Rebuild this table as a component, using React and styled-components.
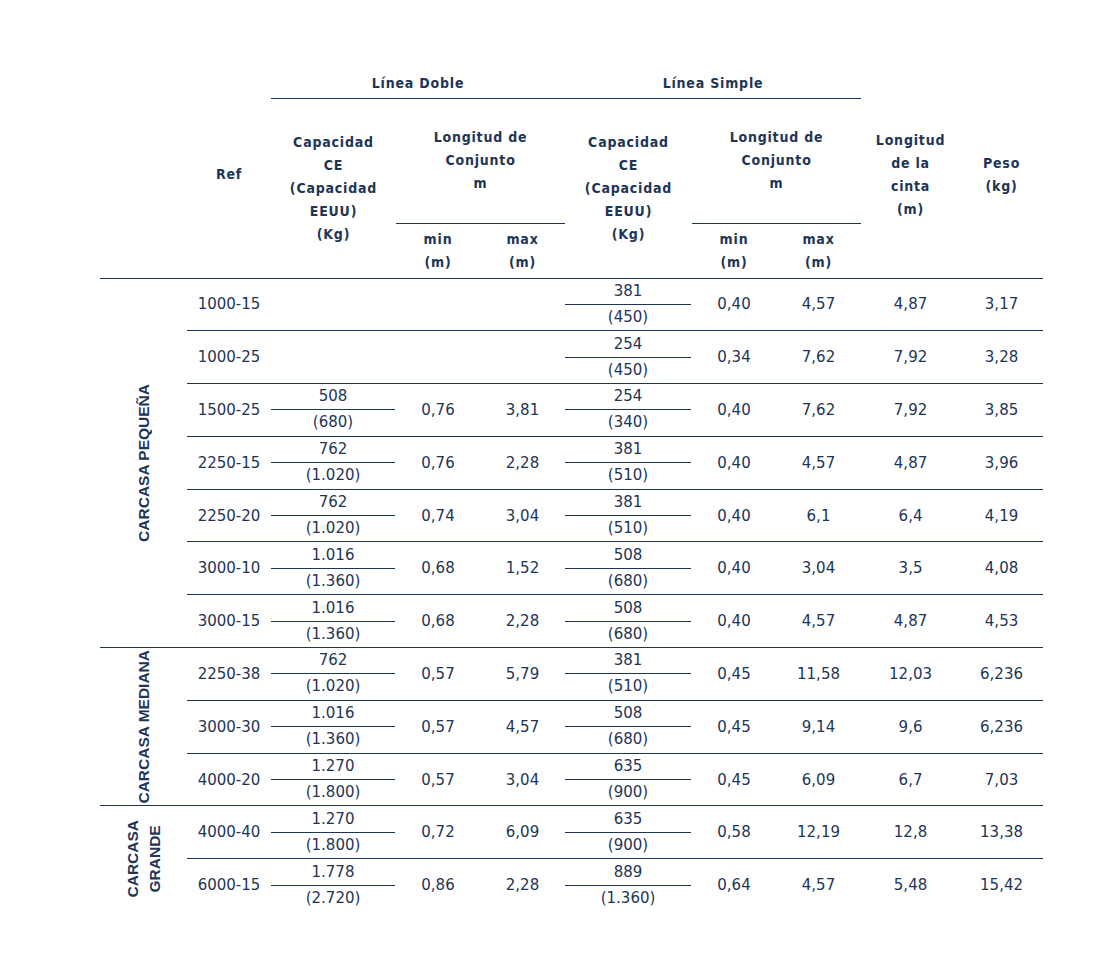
import React from 'react';
import styled, { createGlobalStyle } from 'styled-components';

const navy = '#1e3557';

const GlobalStyle = createGlobalStyle`
  html, body {
    margin: 0;
    padding: 0;
    background: #ffffff;
  }
`;

const Page = styled.div`
  padding: 70px 0 60px 100px;
`;

const Table = styled.table`
  width: 943px;
  table-layout: fixed;
  border-collapse: collapse;
  color: ${navy};
  font-family: 'DejaVu Sans', sans-serif;
  font-size: 15px;
`;

const Head = styled.th`
  font-family: 'DejaVu Sans Condensed', 'DejaVu Sans', sans-serif;
  font-stretch: condensed;
  font-weight: bold;
  font-size: 14px;
  letter-spacing: 0.8px;
  line-height: 23px;
  text-align: center;
  vertical-align: middle;
  padding: 0 0 ${p => p.$lift || 0}px;
  border-bottom: ${p => (p.$rule ? `1px solid ${navy}` : 'none')};
  height: ${p => (p.$h ? `${p.$h}px` : 'auto')};
`;

const Row = styled.tr`
  height: 52.8px;
`;

const Cell = styled.td`
  text-align: center;
  vertical-align: middle;
  padding: 0;
  font-weight: normal;
  line-height: 20px;
  border-top: ${p => (p.$first ? '1.5px' : '1px')} solid ${navy};
`;

const GroupCell = styled(Cell)`
  font-family: 'Liberation Sans', Arial, sans-serif;
  font-weight: bold;
  font-size: 15.5px;
  line-height: 22px;
  white-space: nowrap;
`;

const GroupLabel = styled.div`
  writing-mode: vertical-rl;
  transform: rotate(180deg);
  margin: 0 auto;
  text-align: center;
`;

const Fraction = styled.div`
  display: flex;
  flex-direction: column;
  align-items: stretch;
  margin-right: 1px;
  line-height: 25px;
`;

const Bar = styled.div`
  height: 1px;
  background: ${navy};
`;

const cap = pair =>
  pair ? (
    <Fraction>
      <span>{pair[0]}</span>
      <Bar />
      <span>{pair[1]}</span>
    </Fraction>
  ) : null;

const groups = [
  {
    label: ['CARCASA PEQUEÑA'],
    rows: [
      ['1000-15', null, '', '', ['381', '(450)'], '0,40', '4,57', '4,87', '3,17'],
      ['1000-25', null, '', '', ['254', '(450)'], '0,34', '7,62', '7,92', '3,28'],
      ['1500-25', ['508', '(680)'], '0,76', '3,81', ['254', '(340)'], '0,40', '7,62', '7,92', '3,85'],
      ['2250-15', ['762', '(1.020)'], '0,76', '2,28', ['381', '(510)'], '0,40', '4,57', '4,87', '3,96'],
      ['2250-20', ['762', '(1.020)'], '0,74', '3,04', ['381', '(510)'], '0,40', '6,1', '6,4', '4,19'],
      ['3000-10', ['1.016', '(1.360)'], '0,68', '1,52', ['508', '(680)'], '0,40', '3,04', '3,5', '4,08'],
      ['3000-15', ['1.016', '(1.360)'], '0,68', '2,28', ['508', '(680)'], '0,40', '4,57', '4,87', '4,53'],
    ],
  },
  {
    label: ['CARCASA MEDIANA'],
    rows: [
      ['2250-38', ['762', '(1.020)'], '0,57', '5,79', ['381', '(510)'], '0,45', '11,58', '12,03', '6,236'],
      ['3000-30', ['1.016', '(1.360)'], '0,57', '4,57', ['508', '(680)'], '0,45', '9,14', '9,6', '6,236'],
      ['4000-20', ['1.270', '(1.800)'], '0,57', '3,04', ['635', '(900)'], '0,45', '6,09', '6,7', '7,03'],
    ],
  },
  {
    label: ['CARCASA', 'GRANDE'],
    rows: [
      ['4000-40', ['1.270', '(1.800)'], '0,72', '6,09', ['635', '(900)'], '0,58', '12,19', '12,8', '13,38'],
      ['6000-15', ['1.778', '(2.720)'], '0,86', '2,28', ['889', '(1.360)'], '0,64', '4,57', '5,48', '15,42'],
    ],
  },
];

const widths = [87, 84, 125, 84, 85, 127, 84, 85, 99, 83];

export default function App() {
  return (
    <Page>
      <GlobalStyle />
      <Table>
        <colgroup>
          {widths.map((w, i) => (
            <col key={i} style={{ width: w }} />
          ))}
        </colgroup>
        <thead>
          <tr>
            <Head colSpan={2} $h={28} />
            <Head colSpan={3} $rule>Línea Doble</Head>
            <Head colSpan={3} $rule>Línea Simple</Head>
            <Head colSpan={2} />
          </tr>
          <tr>
            <Head rowSpan={2} />
            <Head rowSpan={2} $lift={26}>Ref</Head>
            <Head rowSpan={2}>
              Capacidad<br />CE<br />(Capacidad<br />EEUU)<br />(Kg)
            </Head>
            <Head colSpan={2} $rule $h={124}>
              Longitud de<br />Conjunto<br />m
            </Head>
            <Head rowSpan={2}>
              Capacidad<br />CE<br />(Capacidad<br />EEUU)<br />(Kg)
            </Head>
            <Head colSpan={2} $rule>
              Longitud de<br />Conjunto<br />m
            </Head>
            <Head rowSpan={2} $lift={26}>
              Longitud<br />de la<br />cinta<br />(m)
            </Head>
            <Head rowSpan={2} $lift={26}>
              Peso<br />(kg)
            </Head>
          </tr>
          <tr>
            <Head $h={54}>min<br />(m)</Head>
            <Head>max<br />(m)</Head>
            <Head>min<br />(m)</Head>
            <Head>max<br />(m)</Head>
          </tr>
        </thead>
        <tbody>
          {groups.map((g, gi) =>
            g.rows.map((r, ri) => {
              const first = gi === 0 && ri === 0;
              return (
                <Row key={r[0]}>
                  {ri === 0 && (
                    <GroupCell rowSpan={g.rows.length} $first={first}>
                      <GroupLabel>
                        {g.label.map(l => (
                          <div key={l}>{l}</div>
                        ))}
                      </GroupLabel>
                    </GroupCell>
                  )}
                  <Cell $first={first}>{r[0]}</Cell>
                  <Cell $first={first}>{cap(r[1])}</Cell>
                  <Cell $first={first}>{r[2]}</Cell>
                  <Cell $first={first}>{r[3]}</Cell>
                  <Cell $first={first}>{cap(r[4])}</Cell>
                  <Cell $first={first}>{r[5]}</Cell>
                  <Cell $first={first}>{r[6]}</Cell>
                  <Cell $first={first}>{r[7]}</Cell>
                  <Cell $first={first}>{r[8]}</Cell>
                </Row>
              );
            })
          )}
        </tbody>
      </Table>
    </Page>
  );
}
